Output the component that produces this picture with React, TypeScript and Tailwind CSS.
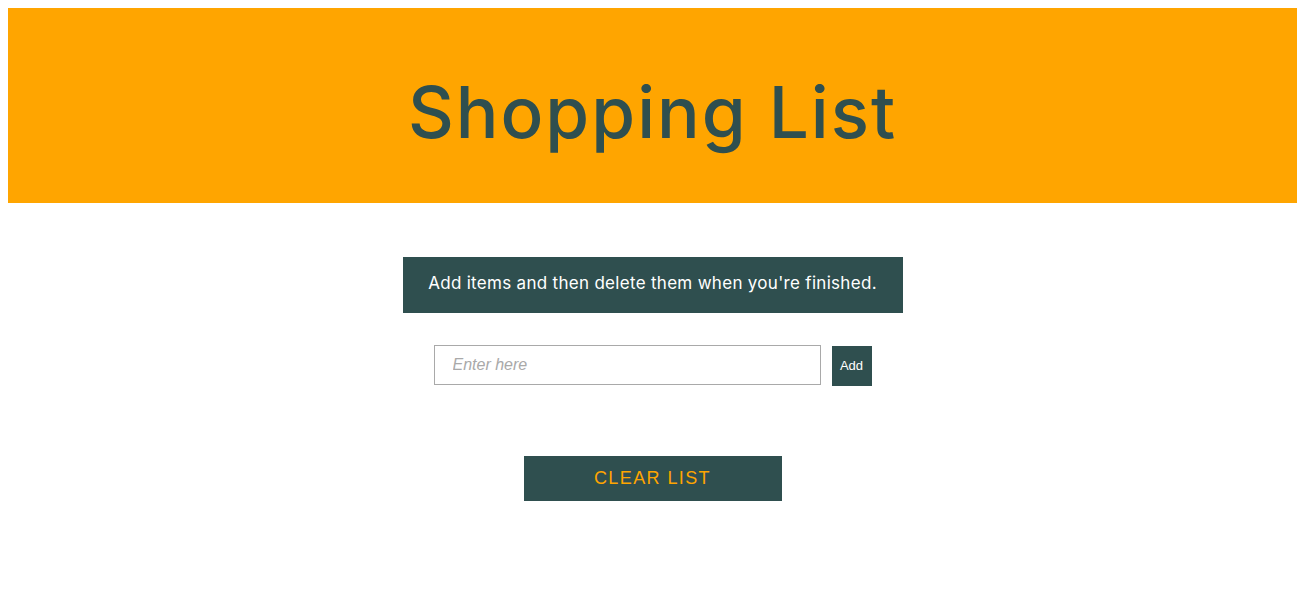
export default function App() {
  return (
    <div className="p-2 bg-white min-h-[609px]" style={{ fontFamily: '"Inter", "Liberation Sans", sans-serif' }}>
      <header className="bg-[#ffa500] h-[195px] flex items-center justify-center">
        <h1 className="text-[#2f4f4f] text-[71px] leading-none font-medium tracking-[2px] pt-[14px]">Shopping List</h1>
      </header>
      <div className="flex flex-col items-center pt-[54px]">
        <div className="w-[500px] h-[56px] bg-[#2f4f4f] text-white text-[17px] tracking-[0.3px] flex items-center justify-center pb-[3px]">
          Add items and then delete them when you're finished.
        </div>
        <div className="flex items-start gap-[11px] mt-[32px]">
          <input
            placeholder="Enter here"
            className="w-[387px] h-[40px] border border-[#a9a9a9] px-[18px] text-[16px] italic placeholder:text-[#a9a9a9] outline-none"
            style={{ fontFamily: '"Liberation Sans", Arial, sans-serif' }}
          />
          <button
            className="w-[40px] h-[40px] bg-[#2f4f4f] text-white text-[13px] mt-[1px]"
            style={{ fontFamily: '"Liberation Sans", Arial, sans-serif' }}
          >
            Add
          </button>
        </div>
        <button
          className="mt-[70px] w-[258px] h-[45px] bg-[#2f4f4f] text-[#ffa500] text-[18px] tracking-[1.4px] uppercase"
          style={{ fontFamily: '"Liberation Sans", Arial, sans-serif' }}
        >
          Clear List
        </button>
      </div>
    </div>
  );
}
